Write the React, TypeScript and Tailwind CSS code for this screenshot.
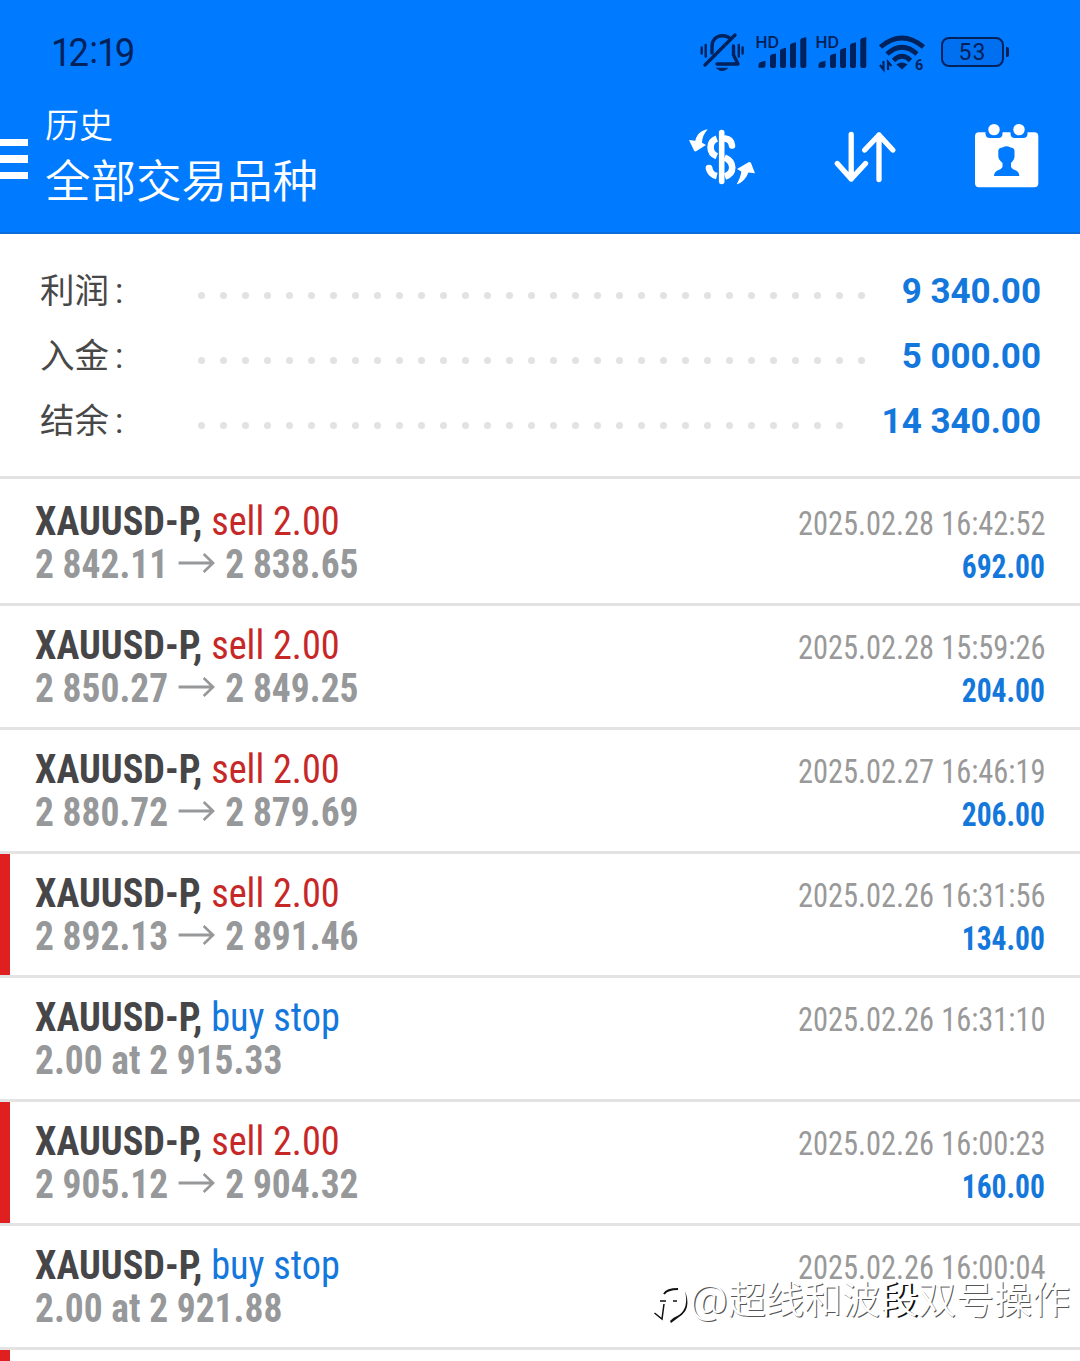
type Deal = {
  kind: "sell" | "buy";
  action: string;
  detail: string[];
  time: string;
  profit?: string;
  stopped?: boolean;
};

const summary = [
  { label: "利润", value: "9 340.00", dots: 31 },
  { label: "入金", value: "5 000.00", dots: 31 },
  { label: "结余", value: "14 340.00", dots: 30 },
];

const deals: Deal[] = [
  { kind: "sell", action: "sell 2.00", detail: ["2 842.11", "2 838.65"], time: "2025.02.28 16:42:52", profit: "692.00" },
  { kind: "sell", action: "sell 2.00", detail: ["2 850.27", "2 849.25"], time: "2025.02.28 15:59:26", profit: "204.00" },
  { kind: "sell", action: "sell 2.00", detail: ["2 880.72", "2 879.69"], time: "2025.02.27 16:46:19", profit: "206.00" },
  { kind: "sell", action: "sell 2.00", detail: ["2 892.13", "2 891.46"], time: "2025.02.26 16:31:56", profit: "134.00", stopped: true },
  { kind: "buy", action: "buy stop", detail: ["2.00 at 2 915.33"], time: "2025.02.26 16:31:10" },
  { kind: "sell", action: "sell 2.00", detail: ["2 905.12", "2 904.32"], time: "2025.02.26 16:00:23", profit: "160.00", stopped: true },
  { kind: "buy", action: "buy stop", detail: ["2.00 at 2 921.88"], time: "2025.02.26 16:00:04" },
];

function MutedBell() {
  return (
    <svg width="48" height="42" viewBox="0 0 48 42" fill="none" stroke="currentColor" strokeWidth="3.4" strokeLinecap="round" strokeLinejoin="round">
      <path d="M14 21V15C14 8 18 3.8 24.5 3.8C28 3.8 31 5 32.5 7" />
      <path d="M35.5 14V23L40 32H19" />
      <path d="M37 3L7 33" />
      <path d="M3.7 15.5v6M7.7 13v11.5M40.8 13v11.5M44.6 15.5v6" strokeWidth="2.4" />
      <path d="M19 36.3H29.5Q24 41 19 36.3Z" fill="currentColor" strokeWidth="1" />
    </svg>
  );
}

function Signal() {
  return (
    <svg className="overflow-visible" width="53" height="36" viewBox="0 0 53 36" fill="currentColor">
      <text x="0.5" y="12.9" fontFamily="Inter, sans-serif" fontSize="16" fontWeight="600">
        HD
      </text>
      <path d="M3.5 32.7v-2.5q0-3 3-3.5l4-1v5q0 2-2 2z" />
      <path d="M15 21.5q0-1.5 1.5-2l4.5-1v12.5q0 2-2 2h-2q-2 0-2-2z" />
      <path d="M25 16q0-1.5 1.5-2l4.5-1.2v18.2q0 2-2 2h-2q-2 0-2-2z" />
      <path d="M35 10.5q0-1.5 1.5-2l4.5-1.2v23.7q0 2-2 2h-2q-2 0-2-2z" />
      <path d="M45.3 5.3q0-1.5 1.5-2l4.5-1.2v28.9q0 2-2 2h-2q-2 0-2-2z" />
    </svg>
  );
}

function Wifi() {
  return (
    <svg className="overflow-visible" width="50" height="38" viewBox="0 0 50 38" fill="none" stroke="currentColor" strokeWidth="4.8">
      <path d="M3.5 13Q24.8-5 46.5 13" />
      <path d="M10 20Q25 6.5 40 20" />
      <path d="M16.5 26.5Q25 18 33.5 26.5" />
      <path d="M19.3 30.5Q25 26.5 30.5 30.5L25 35.5Z" fill="currentColor" stroke="none" />
      <path d="M6.5 27v8.5l-3.5-4.5M11 36v-8l3.5 4" strokeWidth="2.2" />
      <text x="38" y="36" fontFamily="Roboto, sans-serif" fontSize="14.5" fontWeight="700" fill="currentColor" stroke="none">
        6
      </text>
    </svg>
  );
}

function CurrencyIcon() {
  return (
    <svg width="68" height="60" viewBox="0 0 68 60" fill="none" stroke="white" strokeWidth="6.6">
      <path d="M33.7 4.5V53.5" strokeWidth="5.6" strokeLinecap="round" />
      <path d="M28.8 10.5C20.5 13.5 20.5 25 28.8 28.3" />
      <path d="M37 10.5C41 11 43.5 13 44 17.5" strokeLinecap="round" />
      <path d="M36.5 29.5C47 34 46.5 45.5 37 48.5" />
      <path d="M21 39.5C21.5 44 24.5 47 28.8 48" />
      <circle cx="21" cy="40" r="3.3" fill="white" stroke="none" />
      <g fill="white" stroke="none">
        <path d="M19.7 1.3C13.7 2 8.7 6 7.3 12.7L1 12L6 22.5Q7 24 8.5 23L18 17L14 14.7C14 10.3 16 5.3 19.7 1.3Z" />
        <path d="M48.7 56.3C51.5 51 53 47 53.3 43.5L49 41L60.5 34.3Q62 33.5 63 35L67 45.3L60.3 44.5C58.5 50 54 55 48.7 56.3Z" />
      </g>
    </svg>
  );
}

function SortIcon() {
  return (
    <svg width="66" height="60" viewBox="0 0 66 60" fill="none" stroke="white" strokeWidth="5.3" strokeLinecap="round" strokeLinejoin="round">
      <path d="M19.2 6.5V51M5.3 35.5L19.2 51L33.5 35.5" />
      <path d="M47 51.5V7M32.7 22L47 7L60.8 22" />
    </svg>
  );
}

function CalendarIcon() {
  return (
    <svg width="66" height="68" viewBox="0 0 66 68">
      <rect x="1" y="10.3" width="63.3" height="55" rx="4" fill="white" />
      <path d="M11.5 9H28.5V11.5Q28.5 16 24 16H16Q11.5 16 11.5 11.5Z" fill="#007bff" />
      <path d="M36.5 9H53.5V11.5Q53.5 16 49 16H41Q36.5 16 36.5 11.5Z" fill="#007bff" />
      <circle cx="20" cy="7.6" r="5.7" fill="white" />
      <circle cx="45" cy="7.6" r="5.7" fill="white" />
      <path
        d="M24.3 28.5Q25 25.5 28.5 25.5Q32.5 22.8 36.5 25.5Q40 25.5 40.5 28.5V34.5Q40.5 37.5 37 41V45Q38 47 42 48.5Q45.3 50 45.3 54H20Q20 50 23.5 48.5Q27.5 47 28.5 45V41Q24.5 37.5 24.3 34.5Z"
        fill="#007bff"
      />
    </svg>
  );
}

function LongArrow() {
  return (
    <svg className="mt-[-3px] mr-[11px] ml-[11px]" width="39" height="20" viewBox="0 0 39 20" fill="none" stroke="currentColor" strokeWidth="2.8">
      <path d="M0 10H37M27 1L37 10L27 19" />
    </svg>
  );
}

function StatusBar() {
  return (
    <div className="flex h-[100px] items-start pr-[71px] pl-[51px] text-[#00225c]">
      <span className="mt-[30px] origin-left scale-x-[0.96] text-[38px] leading-[46px] tracking-[-3px]">
        12<span className="relative top-[-3px] mr-[2px] ml-[3px]">:</span>19
      </span>
      <div className="ml-auto flex items-start">
        <div className="mt-[32px] mr-[9px]">
          <MutedBell />
        </div>
        <div className="mt-[35px] mr-[7px]">
          <Signal />
        </div>
        <div className="mt-[35px] mr-[9px]">
          <Signal />
        </div>
        <div className="mt-[34px] mr-[14px]">
          <Wifi />
        </div>
        <div className="mt-[37px] flex h-[30px] w-[63px] items-center justify-center rounded-[8px] border-2 border-current bg-[#006ff0] pt-[3px] text-[23px] tracking-[1px]">
          53
        </div>
        <div className="mt-[47px] ml-[2px] h-[10px] w-[3px] rounded-r-[2px] bg-current" />
      </div>
    </div>
  );
}

function Header() {
  return (
    <header className="h-[234px] border-b-2 border-[#0a6cd8] bg-[#007bff]">
      <StatusBar />
      <div className="flex h-[132px] items-start">
        <button className="mt-[38.5px] flex w-[28px] flex-col gap-[9px]">
          <span className="h-[7.5px] w-full bg-white" />
          <span className="h-[7.5px] w-full bg-white" />
          <span className="h-[7.5px] w-full bg-white" />
        </button>
        <div className="ml-[17px] flex flex-col font-[350] text-white">
          <span className="mt-[2px] text-[34px] leading-[48px]">历史</span>
          <span className="mt-[3px] text-[45.5px] leading-[60px]">全部交易品种</span>
        </div>
        <div className="mr-[40px] ml-auto flex items-start">
          <div className="mt-[28px] mr-[76px]">
            <CurrencyIcon />
          </div>
          <div className="mt-[28px] mr-[76px]">
            <SortIcon />
          </div>
          <div className="mt-[22px]">
            <CalendarIcon />
          </div>
        </div>
      </div>
    </header>
  );
}

function Summary() {
  return (
    <section className="h-[245px] border-b-3 border-[#e3e3e3] pt-[26px] pr-[39px] pl-[40px]">
      {summary.map((row) => (
        <div key={row.label} className="flex h-[65px] items-center">
          <span className="mt-[-2px] w-[158px] text-[34.5px] text-[#484848]">
            {row.label}
            <span className="ml-[6px]">:</span>
          </span>
          <div className="mt-[5px] flex gap-[15px]">
            {Array.from({ length: row.dots }, (_, i) => (
              <span key={i} className="size-[7px] rounded-full bg-[#e2e2e2]" />
            ))}
          </div>
          <span className="ml-auto text-[35px] font-bold text-[#1377dc]">{row.value}</span>
        </div>
      ))}
    </section>
  );
}

function DealRow({ deal }: { deal: Deal }) {
  return (
    <li
      className={`flex h-[124px] justify-between border-b-3 border-b-[#e3e3e3] pt-[18px] pr-[35px] font-['Roboto_Condensed','Roboto',sans-serif] [font-stretch:75%] first:h-[127px] first:pt-[21px] ${
        deal.stopped ? "bg-[linear-gradient(#e02020,#e02020)] bg-[length:10px_100%] bg-no-repeat" : ""
      }`}
    >
      <div className="pl-[35px]">
        <div className="flex origin-left scale-x-[0.957] text-[40px] leading-[43px] whitespace-pre">
          <span className="font-bold text-[#464648]">XAUUSD-P, </span>
          <span className={deal.kind === "sell" ? "text-[#c62828]" : "text-[#1377dc]"}>{deal.action}</span>
        </div>
        <div className="flex origin-left scale-x-[0.937] items-center text-[40px] leading-[43px] font-bold text-[#96989a]">
          <span>{deal.detail[0]}</span>
          {deal.detail[1] && <LongArrow />}
          {deal.detail[1] && <span>{deal.detail[1]}</span>}
        </div>
      </div>
      <div className="flex flex-col items-end pt-[2px] text-[33px] leading-[43px]">
        <span className="origin-right scale-x-[0.922] text-[#999999]">{deal.time}</span>
        {deal.profit && <span className="origin-right scale-x-[0.895] font-bold text-[#1377dc]">{deal.profit}</span>}
      </div>
    </li>
  );
}

function Watermark() {
  return (
    <div className="absolute right-[10px] bottom-[35px] flex items-center text-[38px] leading-[52px] font-[350] text-white [text-shadow:1px_1px_0_#555]">
      <svg className="mt-[6px]" width="40" height="44" viewBox="0 0 40 44" fill="none" stroke="#111">
        <path d="M11 13Q14 8 25 8" strokeWidth="2" />
        <path d="M7 20H13M20 20H24" strokeWidth="1.5" />
        <path d="M1.5 32L9 38L11 23" strokeWidth="1.5" />
        <path d="M32 10Q39 28 26 36L18 42L17 40Q21 36 26 34Q36 27 32 10Z" fill="#111" stroke="none" />
      </svg>
      <span className="origin-right scale-x-[1.1]">@</span>
      <span>
        超线和波<span className="[text-shadow:2px_1px_0_#111]">段</span>双号操作
      </span>
    </div>
  );
}

export default function App() {
  return (
    <main className="relative h-[1361px] w-[1080px] overflow-hidden bg-white font-['Roboto','Noto_Sans_CJK_SC',sans-serif]">
      <Header />
      <Summary />
      <ul>
        {deals.map((deal) => (
          <DealRow key={deal.time} deal={deal} />
        ))}
      </ul>
      <div className="h-[11px] w-[10px] bg-[#e02020]" />
      <Watermark />
    </main>
  );
}
